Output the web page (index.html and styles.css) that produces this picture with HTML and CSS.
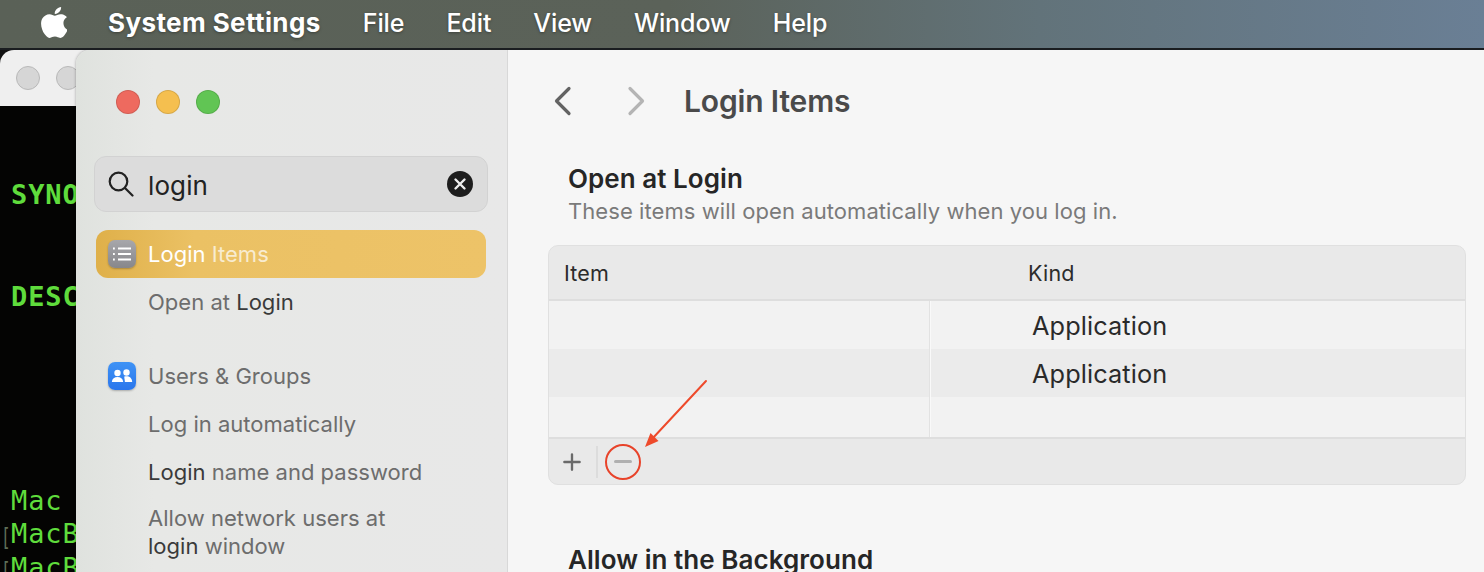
FILE: index.html
```html
<!DOCTYPE html>
<html lang="en">
<head>
<meta charset="utf-8">
<title>System Settings</title>
<link rel="stylesheet" href="styles.css">
</head>
<body>
<header class="menubar">
  <svg class="apple" viewBox="3.300 3 21.200 27" preserveAspectRatio="none" aria-hidden="true"><path d="M21.600 17c0-3.300 2.700-4.900 2.800-5-1.500-2.300-3.900-2.600-4.800-2.600-2-.2-4 1.200-5 1.200-1 0-2.700-1.200-4.400-1.200C7.900 9.500 5.700 10.800 4.500 12.900c-2.400 4.100-.6 10.200 1.700 13.600 1.100 1.600 2.500 3.500 4.200 3.400 1.700-.1 2.300-1.100 4.300-1.100s2.600 1.100 4.300 1.100c1.800 0 3-1.600 4.100-3.300 1.300-1.900 1.800-3.700 1.900-3.800-.1 0-3.400-1.400-3.400-5.800z"/><path d="M18.300 7.200c.9-1.100 1.500-2.600 1.400-4.200-1.300.1-2.900.9-3.800 2-.8 1-1.600 2.500-1.400 4 1.500.1 2.900-.7 3.800-1.800z"/></svg>
  <nav class="menu">
    <span class="menu-app">System Settings</span>
    <span>File</span><span>Edit</span><span>View</span><span>Window</span><span>Help</span>
  </nav>
</header>

<main class="desktop">
  <section class="terminal">
    <div class="terminal-bar"><i class="dot-off"></i><i class="dot-off"></i></div>
    <div class="terminal-body">
      <div class="term-bold t-syn">SYNOPSIS</div>
      <div class="term-bold t-des">DESCRIPTION</div>
      <div class="term-line t-mac">Mac</div>
      <div class="term-line t-b1"><b>[</b>MacBook</div>
      <div class="term-line t-b2"><b>[</b>MacBook</div>
    </div>
  </section>

  <section class="settings">
    <aside class="sidebar">
      <div class="traffic"><i class="red"></i><i class="yellow"></i><i class="green"></i></div>
      <div class="search">
        <svg class="search-icon" viewBox="0 0 26 26" aria-hidden="true"><circle cx="10.500" cy="10.500" r="8.800"/><path d="M17 17l7.500 7.500"/></svg>
        <span class="search-text">login</span>
        <svg class="clear" viewBox="0 0 26 26" aria-hidden="true"><circle class="clear-bg" cx="13" cy="13" r="13"/><path class="clear-x" d="M8.500 8.500l9 9M17.500 8.500l-9 9"/></svg>
      </div>
      <div class="side-item selected">
        <span class="tile tile-gray">
          <svg viewBox="0 0 28 28" aria-hidden="true"><path class="list-l" d="M10 8.500h13M10 14h13M10 19.500h13"/><path class="list-d" d="M5 8.500h1.800M5 14h1.800M5 19.500h1.800"/></svg>
        </span>
        <span class="label">Login <em class="dim-white">Items</em></span>
      </div>
      <div class="side-sub">Open at <strong>Login</strong></div>
      <div class="side-item group">
        <span class="tile tile-blue">
          <svg viewBox="0 0 28 28" aria-hidden="true"><circle cx="9.500" cy="11" r="3.200"/><circle cx="18.500" cy="10.500" r="3.200"/><path d="M3.800 20c.3-3.300 2.700-5 5.700-5s5.400 1.700 5.700 5z"/><path d="M16.300 14.600c.7-.2 1.400-.3 2.200-.3 3 0 5.400 1.700 5.700 5.700h-7.300c-.1-2-.7-4-.6-5.400z"/></svg>
        </span>
        <span class="label">Users &amp; Groups</span>
      </div>
      <div class="side-sub">Log in automatically</div>
      <div class="side-sub"><strong>Login</strong> name and password</div>
      <div class="side-sub wrap">Allow network users at<br><strong>login</strong> window</div>
    </aside>

    <div class="content">
      <div class="toolbar">
        <svg class="chev" viewBox="0 0 20 30" aria-hidden="true"><path d="M16 2.500L3.500 15 16 27.500"/></svg>
        <svg class="chev chev-off" viewBox="0 0 20 30" aria-hidden="true"><path d="M4 2.500L16.500 15 4 27.500"/></svg>
        <h1>Login Items</h1>
      </div>
      <h2>Open at Login</h2>
      <p class="sub">These items will open automatically when you log in.</p>
      <div class="table">
        <div class="thead"><span class="col-item">Item</span><span>Kind</span></div>
        <div class="row"><div class="cell-blank"></div><div class="cell-kind">Application</div></div>
        <div class="row alt"><div class="cell-blank"></div><div class="cell-kind">Application</div></div>
        <div class="row short"><div class="cell-blank"></div><div class="cell-kind"></div></div>
        <div class="tfoot">
          <svg class="plus" viewBox="0 0 20 20" aria-hidden="true"><path d="M10 1.500v17M1.500 10h17"/></svg>
          <span class="sep"></span>
          <span class="minus-btn"><span class="minus"></span></span>
        </div>
        <svg class="arrow" viewBox="0 0 70 70" aria-hidden="true"><path class="shaft" d="M63 2L9 60"/><path class="head" d="M2 68l5.500-14 8 8z"/></svg>
      </div>
      <h2 class="h2-bg">Allow in the Background</h2>
    </div>
  </section>
</main>
</body>
</html>
```
FILE: styles.css
```css
* { box-sizing: border-box; }
html, body { margin: 0; height: 100%; overflow: hidden; }
body {
  width: 1484px;
  height: 572px;
  font-family: Inter, "Liberation Sans", sans-serif;
  background: #111;
  display: flex;
  flex-direction: column;
}
i, em { font-style: normal; }

/* Menu bar */
.menubar {
  height: 50px;
  flex: none;
  display: flex;
  align-items: flex-start;
  background: linear-gradient(90deg, #5a6157 0%, #5b6259 45%, #62737a 70%, #6a7f95 100%);
  border-bottom: 2px solid #1a1d20;
  color: #fff;
  text-shadow: 0 1px 3px rgba(0,0,0,.35);
}
.apple { width: 26px; height: 31px; margin: 7px 0 0 41px; fill: #fff; flex: none; }
.menu { display: flex; gap: 42px; margin-left: 41px; font-size: 25px; line-height: 46px; font-weight: 500; letter-spacing: -.1px; }
.menu-app { font-weight: 700; font-size: 26px; letter-spacing: .4px; }

/* Desktop & windows */
.desktop { position: relative; flex: 1; overflow: hidden; }
.terminal {
  position: absolute;
  left: 0; top: 0;
  width: 120px; height: 540px;
  border-radius: 14px 14px 0 0;
  overflow: hidden;
  background: #040403;
}
.terminal-bar {
  height: 56px;
  background: #efefef;
  display: flex;
  gap: 16px;
  padding: 16px 0 0 16px;
}
.dot-off { width: 24px; height: 24px; border-radius: 50%; background: #d6d6d6; border: 1px solid #b9b9b9; flex: none; }
.terminal-body { position: relative; font-family: "DejaVu Sans Mono", "Liberation Mono", monospace; color: #5fdc3c; font-size: 27px; }
.term-bold { position: absolute; left: 11px; font-weight: 700; line-height: 30px; letter-spacing: .9px; white-space: nowrap; }
.term-line { position: absolute; left: 11px; line-height: 30px; letter-spacing: .9px; white-space: nowrap; }
.term-line b {
  display: inline-block;
  width: 10px;
  margin-left: -10px;
  font-size: 16px;
  letter-spacing: 0;
  transform: scaleY(1.600);
  color: #5f6f58;
  font-weight: 400;
}
.t-syn { top: 74px; }
.t-des { top: 176px; }
.t-mac { top: 380px; }
.t-b1 { top: 413px; }
.t-b2 { top: 447px; }

.settings {
  position: absolute;
  left: 76px; top: 0;
  width: 1420px; height: 540px;
  border-radius: 14px 0 0 0;
  display: flex;
  overflow: hidden;
  box-shadow: 0 0 3px rgba(0,0,0,.35);
}

/* Sidebar */
.sidebar {
  width: 432px;
  flex: none;
  background: linear-gradient(90deg, #dfe2de 0%, #e7e8e6 18%, #e8e8e8 100%);
  border-right: 1px solid #d8d8d8;
  padding: 40px 19px 0 18px;
  color: #6d6d6d;
  font-size: 22px;
  letter-spacing: .02px;
}
.traffic { display: flex; gap: 16px; padding-left: 22px; height: 24px; }
.traffic i { width: 24px; height: 24px; border-radius: 50%; border: 1px solid rgba(0,0,0,.12); }
.red { background: #ee6a5f; }
.yellow { background: #f5bf4f; }
.green { background: #61c554; }

.search {
  margin-top: 42px;
  height: 56px;
  border-radius: 12px;
  background: #dcdcdc;
  border: 1px solid #d2d2d2;
  display: flex;
  align-items: center;
  padding: 0 14px 0 13px;
}
.search-icon { width: 26px; height: 26px; fill: none; stroke: #222; stroke-width: 2.200; stroke-linecap: round; flex: none; }
.search-text { margin-left: 14px; margin-top: 3px; color: #222; font-size: 26px; letter-spacing: .1px; flex: 1; line-height: 30px; }
.clear { width: 26px; height: 26px; flex: none; }
.clear-bg { fill: #1e1e1e; }
.clear-x { stroke: #eee; stroke-width: 2.400; stroke-linecap: round; fill: none; }

.side-item { display: flex; align-items: center; height: 48px; padding-left: 12px; margin-left: 2px; }
.selected {
  margin-top: 18px;
  margin-right: 2px;
  border-radius: 12px;
  background: linear-gradient(90deg, #dfb04a 0%, #ebc164 25%, #edc368 100%);
  color: #fff;
}
.dim-white { color: #f8ecd0; }
.group { margin-top: 26px; }
.tile { width: 28px; height: 28px; border-radius: 7px; flex: none; margin-right: 12px; display: block; box-shadow: 0 1px 2px rgba(0,0,0,.25); }
.tile svg { display: block; width: 28px; height: 28px; }
.tile-gray { background: linear-gradient(180deg, #a7a7ab, #87878b); }
.tile-blue { background: linear-gradient(180deg, #3f93f5, #2a76ec); fill: #fff; }
.list-l { stroke: #fff; stroke-width: 1.800; fill: none; }
.list-d { stroke: #fff; stroke-width: 1.800; fill: none; }
.side-sub { padding-left: 54px; height: 48px; line-height: 48px; white-space: nowrap; }
.side-sub strong { color: #3a3a3a; font-weight: 400; }
.side-sub.wrap { line-height: 28px; height: auto; margin-top: 8px; }

/* Content */
.content { flex: 1; background: #f6f6f6; padding: 0 0 0 40px; position: relative; }
.toolbar { display: flex; align-items: center; height: 102px; padding-left: 5px; margin-bottom: 12px; }
.chev { width: 20px; height: 30px; fill: none; stroke: #636363; stroke-width: 3.200; stroke-linecap: round; stroke-linejoin: round; flex: none; }
.chev-off { stroke: #b4b4b4; margin-left: 53px; }
h1 { margin: 0 0 0 38px; font-size: 30px; font-weight: 600; color: #4a4a4a; letter-spacing: -.15px; }
h2 { margin: 0; padding-left: 20px; font-size: 26px; font-weight: 600; color: #262626; line-height: 30px; letter-spacing: .05px; }
.sub { margin: 3px 0 0; padding-left: 20px; font-size: 22px; line-height: 28px; color: #7a7a7a; letter-spacing: .07px; }
.table {
  position: relative;
  margin-top: 20px;
  width: 918px;
  border: 1px solid #e0e0e0;
  border-radius: 10px;
  background: #e9e9e9;
  font-size: 22px;
}
.thead { height: 55px; display: flex; align-items: center; color: #2c2c2c; font-size: 21.500px; letter-spacing: .2px; padding: 0 0 0 15px; border-bottom: 2px solid #dedede; }
.col-item { width: 464px; }
.row { height: 48px; display: flex; background: #f2f2f2; }
.row.alt { background: #ebebeb; }
.row.short { height: 40px; }
.cell-blank { width: 381px; flex: none; border-right: 1px solid #e2e2e2; box-shadow: 1px 0 0 #f9f9f9; }
.cell-kind { padding-left: 102px; padding-top: 1px; line-height: 48px; font-size: 25.300px; color: #2a2a2a; letter-spacing: .1px; }
.tfoot { height: 47px; display: flex; align-items: center; border-top: 2px solid #dedede; padding-left: 14px; }
.plus { width: 18px; height: 18px; fill: none; stroke: #6a6a6a; stroke-width: 2.600; stroke-linecap: round; flex: none; }
.sep { width: 2px; height: 32px; background: #dcdcdc; margin-left: 15px; }
.minus-btn {
  width: 36px; height: 36px;
  margin-left: 7px;
  border: 2px solid #e8432a;
  border-radius: 50%;
  display: flex; align-items: center; justify-content: center;
}
.minus { width: 18px; height: 3px; background: #b0b0b0; border-radius: 2px; }
.arrow { position: absolute; left: 94px; top: 133px; width: 70px; height: 70px; fill: none; }
.shaft { stroke: #ee4a2b; stroke-width: 2; stroke-linecap: round; }
.head { fill: #ee4a2b; }
.h2-bg { margin-top: 60px; }
```
